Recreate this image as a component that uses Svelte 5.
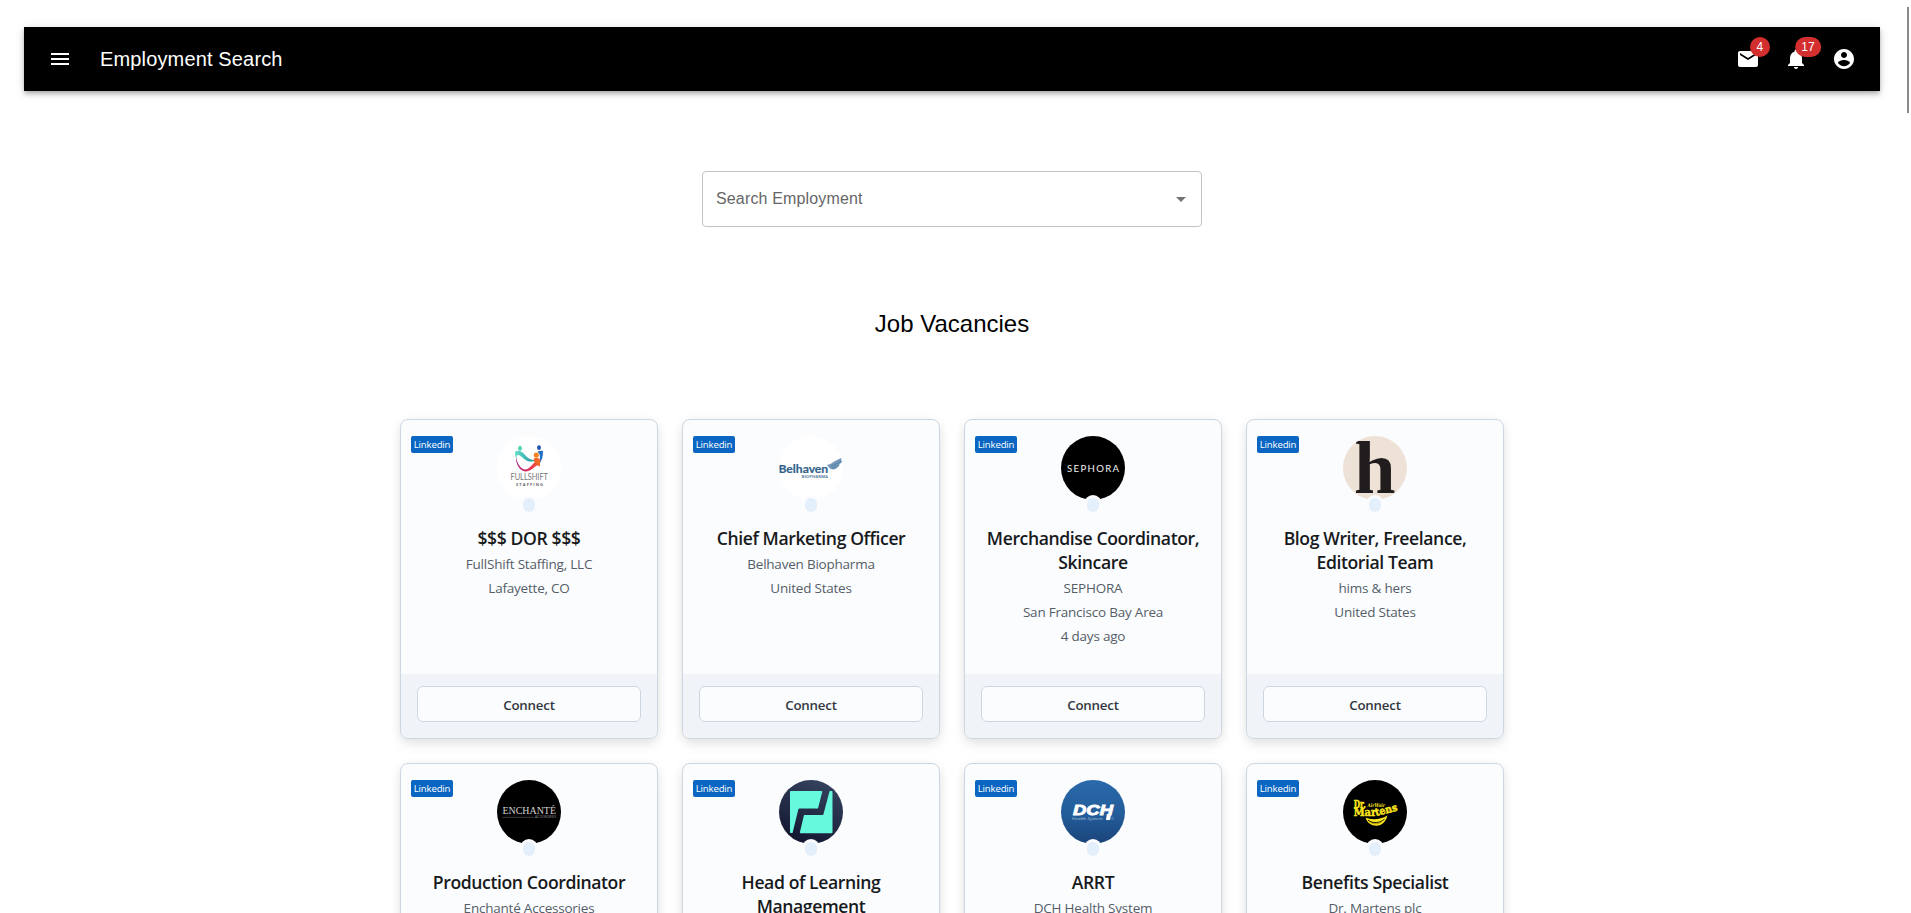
<script>
  const jobs = [
    { logo: 'fullshift', title: '$$$ DOR $$$', lines: ['FullShift Staffing, LLC', 'Lafayette, CO'] },
    { logo: 'belhaven', title: 'Chief Marketing Officer', lines: ['Belhaven Biopharma', 'United States'] },
    { logo: 'sephora', title: 'Merchandise Coordinator, Skincare', lines: ['SEPHORA', 'San Francisco Bay Area', '4 days ago'] },
    { logo: 'hims', title: 'Blog Writer, Freelance, Editorial Team', lines: ['hims & hers', 'United States'] },
    { logo: 'enchante', title: 'Production Coordinator', lines: ['Enchanté Accessories'] },
    { logo: 'learning', title: 'Head of Learning Management', lines: [] },
    { logo: 'dch', title: 'ARRT', lines: ['DCH Health System'] },
    { logo: 'martens', title: 'Benefits Specialist', lines: ['Dr. Martens plc'] }
  ];
</script>

<div class="page">
  <header class="appbar">
    <svg class="icon menu" viewBox="0 0 24 24"><path d="M3 18h18v-2H3v2zm0-5h18v-2H3v2zm0-7v2h18V6H3z" /></svg>
    <span class="brand">Employment Search</span>
    <nav class="actions">
      <button class="icon-btn" aria-label="4 new mails">
        <svg class="icon" viewBox="0 0 24 24"><path d="M20 4H4c-1.1 0-1.99.9-1.99 2L2 18c0 1.1.9 2 2 2h16c1.1 0 2-.9 2-2V6c0-1.1-.9-2-2-2zm0 4l-8 5-8-5V6l8 5 8-5v2z" /></svg>
        <span class="count">4</span>
      </button>
      <button class="icon-btn" aria-label="17 new notifications">
        <svg class="icon" viewBox="0 0 24 24"><path d="M12 22c1.1 0 2-.9 2-2h-4c0 1.1.89 2 2 2zm6-6v-5c0-3.07-1.64-5.64-4.5-6.32V4c0-.83-.67-1.5-1.5-1.5s-1.5.67-1.5 1.5v.68C7.63 5.36 6 7.92 6 11v5l-2 2v1h16v-1l-2-2z" /></svg>
        <span class="count">17</span>
      </button>
      <button class="icon-btn" aria-label="Account">
        <svg class="icon" viewBox="0 0 24 24"><path d="M12 2C6.48 2 2 6.48 2 12s4.48 10 10 10 10-4.48 10-10S17.52 2 12 2zm0 3c1.66 0 3 1.34 3 3s-1.34 3-3 3-3-1.34-3-3 1.34-3 3-3zm0 14.2c-2.5 0-4.71-1.28-6-3.22.03-1.99 4-3.08 6-3.08 1.99 0 5.97 1.09 6 3.08-1.29 1.94-3.5 3.22-6 3.22z" /></svg>
      </button>
    </nav>
  </header>

  <div class="search">
    <span>Search Employment</span>
    <svg viewBox="0 0 24 24"><path d="M7 10l5 5 5-5z" /></svg>
  </div>

  <h1>Job Vacancies</h1>

  <main class="grid">
    {#each jobs as job}
      <article class="card">
        <div class="body">
          <span class="source">Linkedin</span>
          <div class="avatar">
            <svg viewBox="0 0 64 64">
              {#if job.logo === 'fullshift'}
                <rect width="64" height="64" fill="#fff" />
                <defs>
                  <linearGradient id="teal" x1="0" x2="1"><stop offset="0" stop-color="#6be0cb" /><stop offset="1" stop-color="#138f9c" /></linearGradient>
                  <linearGradient id="pink" x1="0" x2="1"><stop offset="0" stop-color="#a32a86" /><stop offset=".6" stop-color="#e5304f" /><stop offset="1" stop-color="#f26a2c" /></linearGradient>
                </defs>
                <ellipse cx="23" cy="12.2" rx="2" ry="2.5" fill="#55d3b4" />
                <ellipse cx="42" cy="11.7" rx="1.9" ry="2.4" fill="#1d50ae" />
                <path d="M18.200 15.500c2.800-1.700 6.600-.6 9.400 3 3.400 4.200 6.500 6 11.300 5.600-4.200 2.700-9 1.700-13-2.200-2.600-2.600-4.400-3.500-5.500-2.700-.8.600-1 1.800-.7 3.700-1.400-2-2-4.900-1.500-7.400z" fill="url(#teal)" />
                <path d="M40.500 15.600c2-.9 4.200-1 5.600-.4-.1 5-1 9.200-4 13.100.3-3.700 1.400-6.700.5-10z" fill="#2470c5" />
                <path d="M19 20.500c1 6.500 4.500 12.800 9 12.900 4.500 0 6.500-4.400 9.500-6.900l4-1.500c1.600 1.500 1.800 3.800 1.500 6-.8-1.400-2-2-3.400-1.300-3.600 2-6.600 6.100-11.600 5.700-5.800-.7-9.500-7.900-9-14.900z" fill="url(#pink)" />
                <circle cx="39.300" cy="19" r="2.600" fill="#f58220" />
                <path d="M36.500 23c2-2 6-1.500 6.900 1.500l-1.400 4.500-4.500-2.500z" fill="#f2682a" />
                <text x="13.500" y="43.800" font-size="8.800" textLength="37.500" lengthAdjust="spacingAndGlyphs" fill="#77787b" class="lato">FULLSHIFT</text>
                <text x="19" y="50" font-size="4" textLength="27" fill="#66676a" class="sans bold">STAFFING</text>
              {:else if job.logo === 'belhaven'}
                <rect width="64" height="64" fill="#fff" />
                <text x="-.6" y="36.900" font-size="11.200" textLength="49.800" lengthAdjust="spacingAndGlyphs" fill="#33638c" stroke="#33638c" stroke-width=".2" class="lato bold">Belhaven</text>
                <text x="22.500" y="41.600" font-size="3.900" textLength="26.500" lengthAdjust="spacingAndGlyphs" fill="#5f86a5" class="sans bold">BIOPHARMA</text>
                <path d="M48 28.700c4.500.3 6-3.700 15-6.900l-1 3.200 1.500-.5c-1 2.300-2 3.200-3.600 4.300l.8.200c-3.600 5-8.300 7-12.700-.3z" fill="#7398b8" />
                <path d="M52 30c4-.8 7-3 10-5M53 32c3-.5 5-1.800 7-3.200" stroke="#4d7ba2" stroke-width=".7" fill="none" />
              {:else if job.logo === 'sephora'}
                <rect width="64" height="64" fill="#000" />
                <text x="6" y="35.800" font-size="9.600" textLength="52" fill="#f2f2f2" class="lato">SEPHORA</text>
              {:else if job.logo === 'hims'}
                <rect width="64" height="64" fill="#eee1d6" />
                <text x="11" y="57" font-size="75" textLength="41.500" lengthAdjust="spacingAndGlyphs" fill="#211d1f" class="serif bold">h</text>
              {:else if job.logo === 'enchante'}
                <rect width="64" height="64" fill="#000" />
                <text x="5.500" y="34.300" font-size="9.600" textLength="53.500" lengthAdjust="spacingAndGlyphs" fill="#d2d2d2" class="serif">ENCHANTÉ</text>
                <path d="M5.500 37.300H37" stroke="#666" stroke-width=".6" />
                <text x="38" y="38" font-size="3.200" textLength="21" lengthAdjust="spacingAndGlyphs" fill="#999" class="sans">ACCESSORIES</text>
              {:else if job.logo === 'learning'}
                <defs><linearGradient id="navy" x1=".7" y1="0" x2=".3" y2="1"><stop offset="0" stop-color="#35435f" /><stop offset="1" stop-color="#12162f" /></linearGradient></defs>
                <rect width="64" height="64" fill="url(#navy)" />
                <path d="M12 11h30.500q1 0 .7 1L39 28.600H20.600q-1 0-1.300 1L13.700 52.500q-.2.600-.8.600h-1.100q-.8 0-.8-.8V12q0-1 1-1zM51.400 11h1.200q.9 0 .9.900v40.400q0 1-1 1H21.700q-1 0-.8-1L25 35h18.300q1 0 1.200-.9l5.900-22.300q.2-.8 1-.8z" fill="#66f9de" />
              {:else if job.logo === 'dch'}
                <defs><linearGradient id="blue" x1="0" y1="0" x2="0" y2="1"><stop offset="0" stop-color="#2a69ab" /><stop offset=".55" stop-color="#235c99" /><stop offset="1" stop-color="#1b4379" /></linearGradient></defs>
                <rect width="64" height="64" fill="url(#blue)" />
                <text x="12" y="35.400" font-size="15" textLength="40" lengthAdjust="spacingAndGlyphs" fill="#fff" stroke="#fff" stroke-width=".9" class="arial bold italic">DCH</text>
                <path d="M45.800 34h4.400l-1.200 6h-4z" fill="#fff" />
                <text x="10.800" y="39.600" font-size="4.300" textLength="31" lengthAdjust="spacingAndGlyphs" fill="#a9c2dc" class="sans italic">Health System</text>
                <circle cx="51.500" cy="38.500" r="1" fill="none" stroke="#a9c2dc" stroke-width=".4" />
              {:else}
                <rect width="64" height="64" fill="#000" />
                <g fill="#fbe51d" class="slab bold">
                  <text x="10.700" y="27.700" font-size="10.500" textLength="12" lengthAdjust="spacingAndGlyphs" stroke="#fbe51d" stroke-width=".5">Dr.</text>
                  <text x="24.500" y="27.300" font-size="5" textLength="17.500" lengthAdjust="spacingAndGlyphs" class="italic">AirWair</text>
                  <g stroke="#fbe51d" stroke-width=".5" font-size="10.500">
                    <text x="10.700" y="36.300" textLength="22.500" lengthAdjust="spacingAndGlyphs">Mar</text>
                    <text x="33" y="36" textLength="22.500" lengthAdjust="spacingAndGlyphs" transform="rotate(-14 33 36)">tens</text>
                  </g>
                  <path d="M22.500 37.500c5 2.500 15 2.500 21.800-2-1 6-5.300 10.200-11 10.200-5 0-9.300-3-10.800-8.200z" />
                </g>
                <path d="M25 40.200c5 3.600 11.500 3 16.500-1" stroke="#000" stroke-width=".9" fill="none" />
                <path d="M27.500 42.500c4 2 8 1.500 11.500-.8" stroke="#554d00" stroke-width=".5" fill="none" />
              {/if}
            </svg>
            <i class="dot"></i>
          </div>
          <h2>{job.title}</h2>
          {#each job.lines as line}
            <p>{line}</p>
          {/each}
        </div>
        <footer><button class="connect">Connect</button></footer>
      </article>
    {/each}
  </main>
  <i class="thumb"></i>
</div>

<style>
  :global(body) {
    background: #fff;
    overflow: hidden;
  }
  .page {
    box-sizing: border-box;
    position: relative;
    width: 1911px;
    height: 913px;
    padding: 27px 31px 0 24px;
    overflow: hidden;
    font-family: 'Liberation Sans', Arial, sans-serif;
  }
  .appbar {
    display: flex;
    align-items: center;
    height: 64px;
    padding: 0 24px;
    box-sizing: border-box;
    background: #000;
    color: #fff;
    box-shadow: 0 2px 4px -1px rgba(0, 0, 0, 0.2), 0 4px 5px 0 rgba(0, 0, 0, 0.14), 0 1px 10px 0 rgba(0, 0, 0, 0.12);
  }
  .icon {
    display: block;
    width: 24px;
    height: 24px;
    fill: #fff;
  }
  .brand {
    margin-left: 28px;
    font-size: 20px;
    line-height: 32px;
    letter-spacing: 0.15px;
  }
  .actions {
    display: flex;
    margin-left: auto;
    margin-right: -12px;
  }
  .icon-btn {
    position: relative;
    padding: 12px;
    border: 0;
    background: none;
  }
  .count {
    position: absolute;
    top: 2px;
    left: 36px;
    transform: translateX(-50%);
    box-sizing: border-box;
    min-width: 20px;
    height: 20px;
    padding: 0 6px;
    border-radius: 10px;
    background: #d32f2f;
    color: #fff;
    font: 12px/20px 'Liberation Sans', Arial, sans-serif;
    letter-spacing: 0.15px;
    text-align: center;
  }
  .search {
    box-sizing: border-box;
    display: flex;
    align-items: center;
    justify-content: space-between;
    width: 500px;
    height: 56px;
    margin: 80px auto 0;
    padding: 0 8px 0 13px;
    border: 1px solid #c4c4c4;
    border-radius: 4px;
    color: #666;
    font-size: 16px;
    letter-spacing: 0.15px;
  }
  .search svg {
    width: 24px;
    height: 24px;
    fill: #757575;
  }
  h1 {
    margin: 81px 0 79px;
    font-size: 24px;
    font-weight: 400;
    line-height: 32px;
    text-align: center;
    color: #000;
  }
  .grid {
    display: grid;
    grid-template-columns: repeat(4, 258px);
    grid-auto-rows: 320px;
    gap: 24px;
    justify-content: center;
    font-family: 'Open Sans', 'Noto Sans', sans-serif;
  }
  .card {
    box-sizing: border-box;
    display: flex;
    flex-direction: column;
    border: 1px solid #cdd7e1;
    border-radius: 8px;
    background: #fbfcfe;
    overflow: hidden;
    box-shadow: 0 2px 12px -1px rgba(21, 21, 21, 0.08), 0 6px 14px -2px rgba(21, 21, 21, 0.09);
  }
  .body {
    position: relative;
    flex: 1;
    display: flex;
    flex-direction: column;
    align-items: center;
    padding: 16px 16px 0;
    text-align: center;
  }
  .source {
    position: absolute;
    left: 10px;
    top: 16px;
    width: 42px;
    height: 17px;
    border-radius: 2px;
    background: #0a66c2;
    color: #fff;
    font-size: 9.6px;
    line-height: 17px;
    letter-spacing: -0.15px;
  }
  .avatar {
    position: relative;
    width: 64px;
    height: 64px;
    margin-bottom: 26px;
  }
  .avatar svg {
    display: block;
    width: 64px;
    height: 64px;
    border-radius: 50%;
  }
  .dot {
    position: absolute;
    left: 26px;
    top: 62px;
    width: 12px;
    height: 14px;
    border-radius: 6px;
    background: #e3effb;
    box-shadow: 0 0 0 3px #fbfcfe;
  }
  h2 {
    margin: 0 0 2px;
    color: #171a1c;
    font-size: 17.6px;
    font-weight: 600;
    line-height: 24px;
    letter-spacing: -0.4px;
  }
  p {
    margin: 0;
    color: #555e68;
    font-size: 13.5px;
    line-height: 24px;
    letter-spacing: -0.22px;
  }
  footer {
    display: flex;
    height: 64px;
    box-sizing: border-box;
    padding: 12px 16px 16px;
    background: #f0f4f8;
  }
  .connect {
    flex: 1;
    padding: 2px 0 0;
    border: 1px solid #cdd7e1;
    border-radius: 6px;
    background: #fbfcfe;
    color: #32383e;
    font: 600 13.3px/20px 'Open Sans', 'Noto Sans', sans-serif;
    letter-spacing: -0.2px;
  }
  .thumb {
    position: absolute;
    right: 2px;
    top: 7px;
    width: 2px;
    height: 106px;
    background: #8b8b8b;
  }
  .sans { font-family: 'Open Sans', sans-serif; }
  .arial { font-family: 'Liberation Sans', Arial, sans-serif; }
  .lato { font-family: Lato, sans-serif; }
  .serif { font-family: 'Liberation Serif', serif; }
  .slab { font-family: 'DejaVu Serif', serif; }
  .bold { font-weight: 700; }
  .italic { font-style: italic; }
</style>
